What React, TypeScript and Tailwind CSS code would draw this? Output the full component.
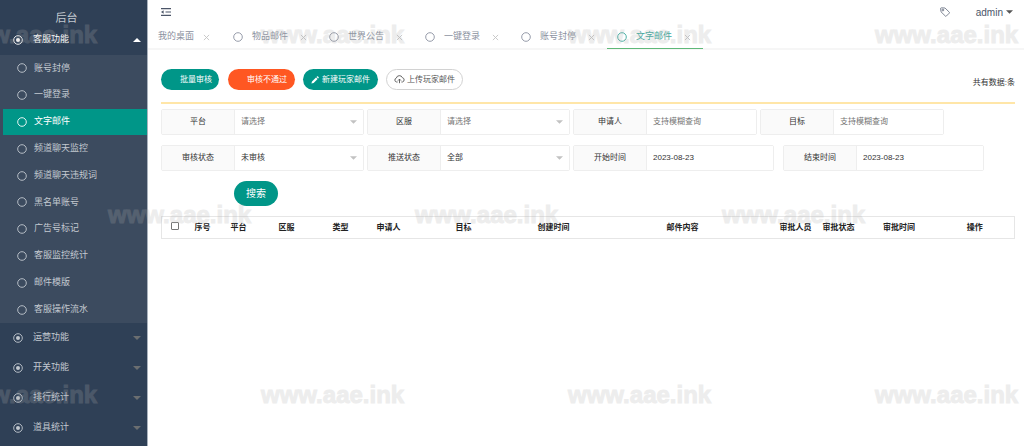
import type { ReactNode } from 'react';

const subItems = [
  '账号封停',
  '一键登录',
  '文字邮件',
  '频道聊天监控',
  '频道聊天违规词',
  '黑名单账号',
  '广告号标记',
  '客服监控统计',
  '邮件模版',
  '客服操作流水'
];

const groups = ['运营功能', '开关功能', '排行统计', '道具统计'];

const tabs = ['物品邮件', '世界公告', '一键登录', '账号封停', '文字邮件'];

const activePage = '文字邮件';

const columns = [
  { title: '序号', width: 'w-[28px]' },
  { title: '平台', width: 'w-[44px]' },
  { title: '区服', width: 'w-[52px]' },
  { title: '类型', width: 'w-[56px]' },
  { title: '申请人', width: 'w-[40px]' },
  { title: '目标', width: 'w-[110px]' },
  { title: '创建时间', width: 'w-[70px]' },
  { title: '邮件内容', width: '' },
  { title: '审批人员', width: 'w-[38px]' },
  { title: '审批状态', width: 'w-[48px]' },
  { title: '审批时间', width: 'w-[73px]' },
  { title: '操作', width: 'w-[79px]' }
];

const watermarks = [
  'left-[-46px] top-[20px]',
  'left-[261px] top-[20px]',
  'left-[568px] top-[20px]',
  'left-[875px] top-[20px]',
  'left-[108px] top-[200px]',
  'left-[415px] top-[200px]',
  'left-[722px] top-[200px]',
  'left-[-46px] top-[380px]',
  'left-[261px] top-[380px]',
  'left-[568px] top-[380px]',
  'left-[875px] top-[380px]'
];

function Ring({ dot = false }: { dot?: boolean }) {
  return (
    <svg viewBox="0 0 10 10" className="size-[10px] shrink-0" fill="none" stroke="currentColor" aria-hidden="true">
      <circle cx="5" cy="5" r="4.3" strokeWidth="0.9" />
      {dot && <circle cx="5" cy="5" r="2" fill="currentColor" stroke="none" />}
    </svg>
  );
}

function Caret({ className, up = false }: { className: string; up?: boolean }) {
  return (
    <svg viewBox="0 0 8 4" className={className} fill="currentColor" aria-hidden="true">
      <path d={up ? 'M0 4L4 0L8 4Z' : 'M0 0H8L4 4Z'} />
    </svg>
  );
}

function Cross() {
  return (
    <svg viewBox="0 0 8 8" className="size-[7px]" fill="none" stroke="currentColor" aria-hidden="true">
      <path d="M1 1L7 7M7 1L1 7" />
    </svg>
  );
}

function Sidebar() {
  return (
    <aside className="w-[148px] shrink-0 border-r border-[#a9b2bd] bg-[#2f4056] text-[9px] text-[#c3c9d0]">
      <div className="flex h-[25px] items-end justify-center pr-[14px] text-[11px] leading-[14px]">后台</div>
      <nav>
        <button type="button" className="flex h-[30px] w-full items-center pl-[13px] pr-[6px] text-white">
          <Ring dot />
          <span className="ml-[10px] flex-1 text-left">客服功能</span>
          <Caret up className="h-[4px] w-[8px]" />
        </button>
        <ul className="grid h-[268px] auto-rows-fr bg-[#3c4b5f] pl-[3px]">
          {subItems.map((item) => (
            <li key={item} className="grid">
              <a
                href="#"
                className={
                  item === activePage
                    ? 'flex items-center gap-[7px] bg-[#009688] pl-[14px] text-white'
                    : 'flex items-center gap-[7px] pl-[14px]'
                }
              >
                <Ring />
                {item}
              </a>
            </li>
          ))}
        </ul>
        {groups.map((group) => (
          <button key={group} type="button" className="flex h-[30px] w-full items-center pl-[13px] pr-[6px]">
            <Ring dot />
            <span className="ml-[10px] flex-1 text-left">{group}</span>
            <Caret className="h-[4px] w-[8px] text-[#6b6e70]" />
          </button>
        ))}
      </nav>
    </aside>
  );
}

function TopBar() {
  return (
    <header className="flex h-[24px] items-center pl-[13px] pr-[11px] text-[#4b5568]">
      <button type="button" aria-label="折叠菜单">
        <svg viewBox="0 0 10 8" className="h-[8px] w-[10px]" fill="none" stroke="currentColor">
          <path d="M0 0.6H10M4.5 4H10M0 7.4H10" strokeWidth="1.2" />
          <path d="M0 4L2.6 2.2V5.8Z" fill="currentColor" stroke="none" />
        </svg>
      </button>
      <button type="button" aria-label="标签" className="ml-auto">
        <svg viewBox="0 0 10 10" className="size-[10px]" fill="none" stroke="currentColor" strokeWidth="0.7">
          <path d="M0.6 1.6Q0.6 0.8 1.4 0.8L5 1L9.3 5.2Q9.7 5.7 9.3 6.1L6.3 9.1Q5.8 9.5 5.4 9.1L1 4.8Z" />
          <circle cx="2.9" cy="3" r="0.9" />
        </svg>
      </button>
      <button type="button" className="ml-[26px] flex items-center gap-[3px] text-[10px]">
        admin
        <Caret className="h-[4px] w-[7px] text-[#555]" />
      </button>
    </header>
  );
}

function TabBar() {
  return (
    <div className="flex h-[26px] border-b-2 border-[#f6f6f6] text-[9px] text-[#8b91a0]">
      <div className="flex w-[75px] items-center pl-[10px] pt-[2px]">
        <a href="#">我的桌面</a>
        <button type="button" aria-label="关闭" className="ml-[9px] text-[#c2c2c2]">
          <Cross />
        </button>
      </div>
      {tabs.map((tab) => (
        <div
          key={tab}
          className={
            tab === activePage
              ? 'flex h-[25px] w-[96px] items-center border-b border-[#5fb878] pl-[10px] pt-[2px] text-[#3aa99d]'
              : 'flex w-[96px] items-center pl-[10px] pt-[2px]'
          }
        >
          <Ring />
          <a href="#" className="ml-[9px]">
            {tab}
          </a>
          <button type="button" aria-label="关闭" className="ml-[12px] text-[#c2c2c2]">
            <Cross />
          </button>
        </div>
      ))}
    </div>
  );
}

function Toolbar() {
  return (
    <div className="flex items-center text-[8px] text-white">
      <button type="button" className="h-[21px] rounded-full bg-[#009688] pl-[19px] pr-[7px]">
        批量审核
      </button>
      <button type="button" className="ml-[9px] h-[21px] rounded-full bg-[#ff5722] pl-[19px] pr-[8px]">
        审核不通过
      </button>
      <button
        type="button"
        className="ml-[8px] flex h-[21px] items-center gap-[3px] rounded-full bg-[#009688] pl-[8px] pr-[8px]"
      >
        <svg viewBox="0 0 8 8" className="size-[8px]" fill="currentColor" aria-hidden="true">
          <path d="M0.4 7.6L1 5.4L5 1.4L6.6 3L2.6 7ZM5.5 0.9L6.2 0.3Q6.5 0 6.9 0.4L7.6 1.1Q8 1.5 7.6 1.9L7.1 2.5Z" />
        </svg>
        新建玩家邮件
      </button>
      <button
        type="button"
        className="ml-[8px] flex h-[21px] items-center gap-[2px] rounded-full border border-[#d2d2d2] bg-white px-[7px] text-[#555]"
      >
        <svg viewBox="0 0 11 9" className="h-[9px] w-[11px]" fill="none" stroke="currentColor" strokeWidth="0.9">
          <path d="M3.6 7H2.6A2 2 0 0 1 2.3 3.1A3.2 3.2 0 0 1 8.4 2.7A2.2 2.2 0 0 1 8.4 7H7.4" />
          <path d="M5.5 8.2V4.2M4 5.6L5.5 4.1L7 5.6" />
        </svg>
        上传玩家邮件
      </button>
      <p className="ml-auto mt-[6px] text-[#333]">共有数据:条</p>
    </div>
  );
}

function Field({ id, label, width, children }: { id: string; label: string; width: string; children: ReactNode }) {
  return (
    <div className={`flex h-[26px] rounded-[2px] border border-[#eeeeee] text-[8px] text-[#333] ${width}`}>
      <label
        htmlFor={id}
        className="flex w-[73px] shrink-0 items-center justify-center border-r border-[#eeeeee] bg-[#fafafa]"
      >
        {label}
      </label>
      {children}
    </div>
  );
}

function SelectField({ id, label, value, muted = false }: { id: string; label: string; value: string; muted?: boolean }) {
  return (
    <Field id={id} label={label} width="w-[203px]">
      <div className="relative flex min-w-0 flex-1">
        <select
          id={id}
          className={
            muted
              ? 'w-full appearance-none bg-white pl-[6px] text-[#757575]'
              : 'w-full appearance-none bg-white pl-[6px] text-[#333]'
          }
        >
          <option>{value}</option>
        </select>
        <Caret className="pointer-events-none absolute right-[6px] top-[10px] h-[4px] w-[7px] text-[#c2c2c2]" />
      </div>
    </Field>
  );
}

function TextField({ id, label, width, value }: { id: string; label: string; width: string; value?: string }) {
  return (
    <Field id={id} label={label} width={width}>
      <input
        id={id}
        type="text"
        defaultValue={value}
        placeholder="支持模糊查询"
        className="w-full min-w-0 flex-1 bg-white pl-[6px] placeholder:text-[#757575]"
      />
    </Field>
  );
}

function SearchForm() {
  return (
    <form>
      <div className="flex gap-[3px]">
        <SelectField id="platform" label="平台" value="请选择" muted />
        <SelectField id="server" label="区服" value="请选择" muted />
        <TextField id="applicant" label="申请人" width="w-[184px]" />
        <TextField id="target" label="目标" width="w-[184px]" />
      </div>
      <div className="mt-[10px] flex gap-[3px]">
        <SelectField id="audit" label="审核状态" value="未审核" />
        <SelectField id="push" label="推送状态" value="全部" />
        <TextField id="start" label="开始时间" width="w-[201px]" value="2023-08-23" />
        <div className="ml-[6px]">
          <TextField id="end" label="结束时间" width="w-[201px]" value="2023-08-23" />
        </div>
      </div>
      <button type="button" className="ml-[73px] mt-[10px] h-[25px] rounded-full bg-[#009688] px-[12px] text-[10px] text-white">
        搜索
      </button>
    </form>
  );
}

function MailTable() {
  return (
    <table className="mt-[10px] w-full table-fixed border border-[#e6e6e6] text-[8px] text-[#222]">
      <thead>
        <tr className="h-[22px]">
          <th className="w-[27px] p-0">
            <input
              type="checkbox"
              aria-label="全选"
              className="mx-auto mb-[3px] block size-[8px] appearance-none rounded-[1px] border border-[#767676] bg-white"
            />
          </th>
          {columns.map((column) => (
            <th key={column.title} className={`p-0 text-center font-bold whitespace-nowrap ${column.width}`}>
              {column.title}
            </th>
          ))}
        </tr>
      </thead>
    </table>
  );
}

export default function App() {
  return (
    <div className="relative flex min-h-screen overflow-hidden bg-white font-['Liberation_Sans','Noto_Sans_CJK_SC',sans-serif]">
      <Sidebar />
      <div className="min-w-0 flex-1">
        <TopBar />
        <TabBar />
        <main className="pl-[13px] pr-[9px] pt-[19px]">
          <Toolbar />
          <hr className="mb-[5px] mt-[12px] border-t-2 border-[#ffe6a8]" />
          <SearchForm />
          <MailTable />
        </main>
      </div>
      <div className="pointer-events-none absolute inset-0 overflow-hidden" aria-hidden="true">
        {watermarks.map((place) => (
          <span
            key={place}
            className={`absolute text-[24px] leading-[30px] font-bold text-[#afafaf] opacity-22 [-webkit-text-stroke:1px_#afafaf] [stroke-linejoin:round] ${place}`}
          >
            www.aae.ink
          </span>
        ))}
      </div>
    </div>
  );
}
